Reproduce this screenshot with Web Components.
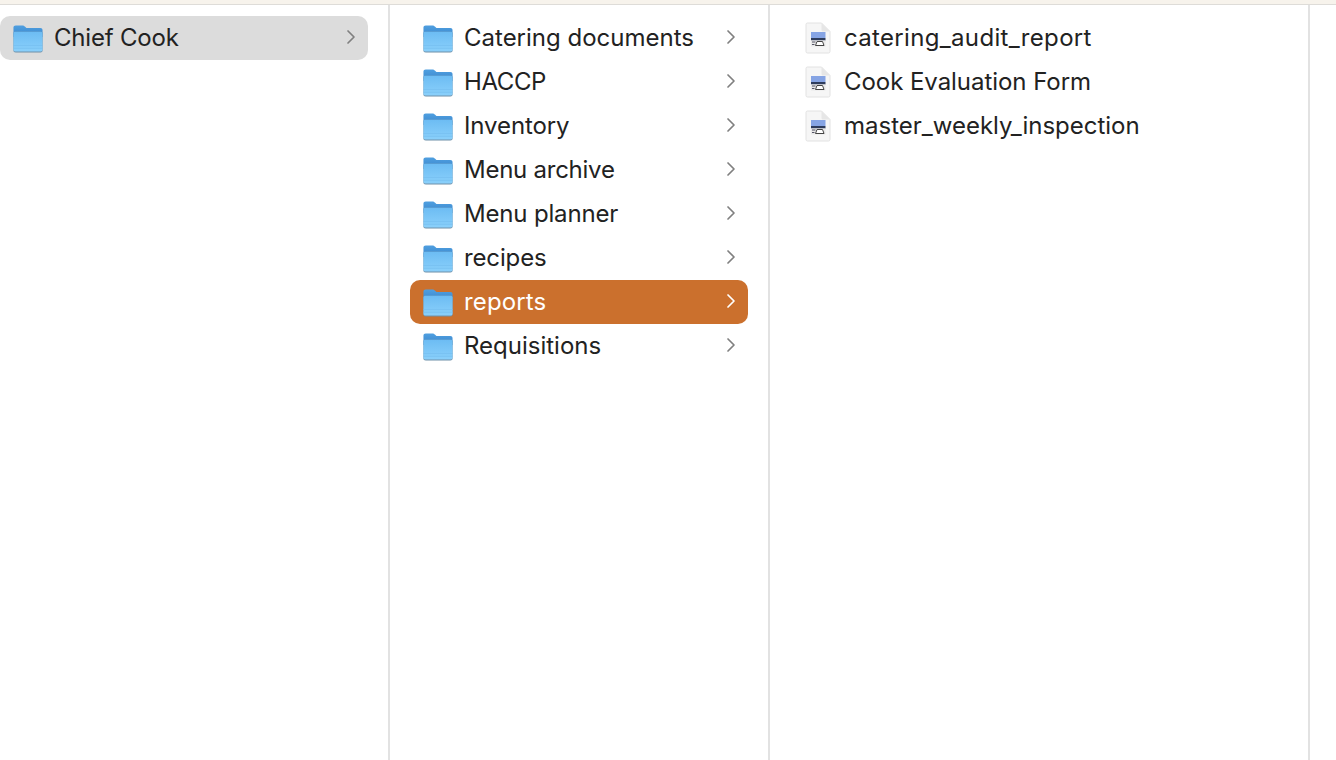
<!DOCTYPE html>
<html>
<head>
<meta charset="utf-8">
<title>Chief Cook</title>
<style>
  html, body { margin: 0; height: 100%; background: #fff; overflow: hidden; }
  body { font-family: Inter, "Liberation Sans", sans-serif; }
</style>
</head>
<body>
<finder-window></finder-window>

<template id="folder-tpl">
  <svg width="32" height="30" viewBox="0.6 0 30.8 30" preserveAspectRatio="none" style="display:block">
    <defs>
      <linearGradient id="front" x1="0" y1="0" x2="0" y2="1">
        <stop offset="0" stop-color="#6cbcf3"/>
        <stop offset="1" stop-color="#8ad0fb"/>
      </linearGradient>
      <linearGradient id="back" x1="0" y1="0" x2="0" y2="1">
        <stop offset="0" stop-color="#4f9fe0"/>
        <stop offset="1" stop-color="#3a86cc"/>
      </linearGradient>
    </defs>
    <path d="M2 4.600C2 3.200 2.800 2.500 4.200 2.500H10.500C11.700 2.500 12.300 2.900 13 3.600L14.500 5H27.800C29.200 5 30 5.800 30 7.200V14H2Z" fill="url(#back)"/>
    <path d="M2 10.500C2 9.300 2.700 8.700 3.900 8.700H28.100C29.300 8.700 30 9.300 30 10.500V27.300C30 28.800 29.300 29.500 27.800 29.500H4.200C2.700 29.500 2 28.800 2 27.300Z" fill="#6f8fa8"/>
    <path d="M2 10.500C2 9.300 2.700 8.700 3.900 8.700H28.100C29.300 8.700 30 9.300 30 10.500V26.500C30 28 29.300 28.600 27.800 28.600H4.200C2.700 28.600 2 28 2 26.500Z" fill="url(#front)"/>
    <path d="M2 22.500H30M2 25.300H30" stroke="#74bdee" stroke-width=".6" fill="none"/>
  </svg>
</template>

<template id="doc-tpl">
  <svg width="28" height="32" viewBox="0 0 28 32" style="display:block">
    <path d="M2 2.500C2 1.700 2.700 1 3.500 1H17.500L26 9.500V29.500C26 30.300 25.300 31 24.500 31H3.500C2.700 31 2 30.300 2 29.500Z" fill="#f6f6f6" stroke="#e2e2e2"/>
    <path d="M17.500 1V8C17.500 8.900 18.100 9.500 19 9.500H26Z" fill="#e6e6e6"/>
    <rect x="7" y="10" width="14.500" height="6" fill="#86a4e4"/>
    <rect x="7" y="16" width="14.500" height="2.500" fill="#2e3c5c"/>
    <rect x="7" y="18.500" width="14.500" height="6" fill="#e9e9e9"/>
    <path d="M13 19.500h5.500l1.500 4h-8.500Z" fill="#fff" stroke="#444" stroke-width="1"/>
    <path d="M8 20h3.500M8 22.500h2.500" stroke="#556" stroke-width="1"/>
  </svg>
</template>

<script>
class FinderRow extends HTMLElement {
  connectedCallback() {
    const kind = this.getAttribute('kind') || 'folder';
    const root = this.attachShadow({ mode: 'open' });
    root.innerHTML = `
      <style>
        :host { display: flex; align-items: center; height: 44px; border-radius: 10px; color: #222; position: relative; }
        :host([state="inactive"]) { background: #dcdcdc; }
        :host([state="active"]) { background: #cb702d; color: #fff; }
        .icon { flex: none; margin-right: var(--icon-gap, 9px); margin-left: var(--icon-left, 12px); }
        .name { flex: 1; font-size: 24px; line-height: 44px; white-space: nowrap; }
        .chevron { flex: none; display: block; margin-right: 11px; margin-top: -2px; stroke: #808080; }
        :host([state="active"]) .chevron { stroke: #fff; }
      </style>
      <span class="icon"></span>
      <span class="name"><slot></slot></span>
      ${kind === 'folder' ? `<svg class="chevron" width="12" height="16" viewBox="0 0 12 16" fill="none" stroke-width="1.700" stroke-linecap="round" stroke-linejoin="round"><path d="M3 2l6 6-6 6"/></svg>` : ''}
    `;
    const tpl = document.getElementById(kind === 'folder' ? 'folder-tpl' : 'doc-tpl');
    root.querySelector('.icon').appendChild(tpl.content.cloneNode(true));
  }
}

class FinderColumn extends HTMLElement {
  constructor() {
    super();
    this.attachShadow({ mode: 'open' }).innerHTML = `
      <style>
        :host { display: flex; flex-direction: column; box-sizing: border-box; border-right: 2px solid #e2e2e2; min-width: 0; }
      </style>
      <slot></slot>
    `;
  }
}

class FinderWindow extends HTMLElement {
  constructor() {
    super();
    // second value of each item is letter-spacing, Inter runs a little off the original font
    this.columns = [
      { width: 390, pad: '11px 20px 0 0', gap: '10px', left: '12px', inactive: 0, items: [['Chief Cook', -0.2]] },
      { width: 380, pad: '11px 20px 0 20px', gap: '10px', left: '12px', active: 6,
        items: [['Catering documents', 0], ['HACCP', -0.4], ['Inventory', -0.1], ['Menu archive', -0.25],
                ['Menu planner', -0.17], ['recipes', -0.14], ['reports', 0.14], ['Requisitions', 0]] },
      { width: 540, pad: '11px 20px 0 20px', gap: '12px', left: '14px', kind: 'file',
        items: [['catering_audit_report', 0.33], ['Cook Evaluation Form', -0.05], ['master_weekly_inspection', 0]] }
    ];
    this.attachShadow({ mode: 'open' });
  }

  connectedCallback() {
    this.render();
  }

  render() {
    this.shadowRoot.innerHTML = `
      <style>
        :host { display: flex; flex-direction: column; height: 760px; }
        .top { flex: none; height: 4px; background: #f7f3ec; border-bottom: 1px solid #dedcd8; }
        .cols { flex: 1; display: flex; min-height: 0; }
        finder-column { flex: none; }
      </style>
      <div class="top"></div>
      <div class="cols">
        ${this.columns.map(c => `
          <finder-column style="width:${c.width}px;padding:${c.pad};box-sizing:border-box;--icon-gap:${c.gap};--icon-left:${c.left}">
            ${c.items.map(([name, track], i) => `
              <finder-row kind="${c.kind || 'folder'}" style="letter-spacing:${track}px" ${c.inactive === i ? 'state="inactive"' : ''} ${c.active === i ? 'state="active"' : ''}>${name}</finder-row>
            `).join('')}
          </finder-column>
        `).join('')}
      </div>
    `;
  }
}

customElements.define('finder-row', FinderRow);
customElements.define('finder-column', FinderColumn);
customElements.define('finder-window', FinderWindow);
</script>
</body>
</html>
